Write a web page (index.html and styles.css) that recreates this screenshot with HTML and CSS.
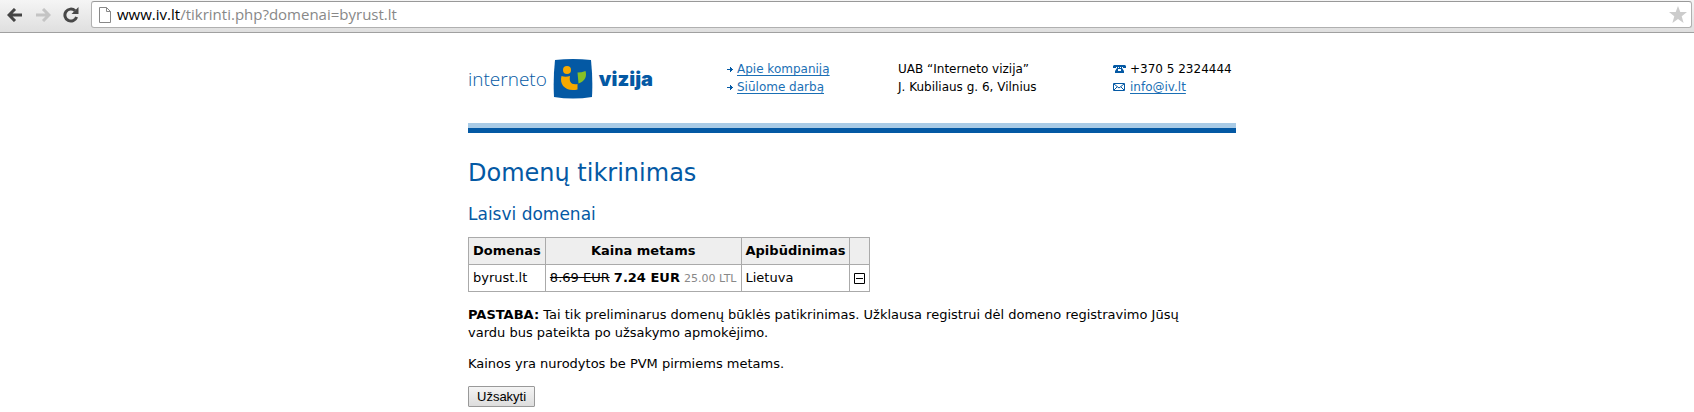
FILE: index.html
```html
<!DOCTYPE html>
<html lang="lt">
<head>
    <meta charset="UTF-8">
    <meta name="viewport" content="width=device-width, initial-scale=1.0">
    <title>Domenų tikrinimas</title>
    <link rel="stylesheet" href="styles.css">
</head>
<body>
    <div class="toolbar">
        <button class="nav-button" type="button" aria-label="Atgal">
            <svg width="16" height="14" viewBox="0 0 16 14" fill="none" stroke="#444" stroke-width="3"><path d="M8 1L2 7l6 6M2 7h13"/></svg>
        </button>
        <button class="nav-button" type="button" aria-label="Pirmyn" disabled>
            <svg width="16" height="14" viewBox="0 0 16 14" fill="none" stroke="#c4c4c4" stroke-width="3"><path d="M8 1l6 6-6 6M14 7H1"/></svg>
        </button>
        <button class="nav-button" type="button" aria-label="Perkrauti">
            <svg width="16" height="16" viewBox="0 0 16 16"><path d="M12 3.700A6 6 0 1 0 13.600 10" fill="none" stroke="#484848" stroke-width="3"/><path d="M15.500 0v7H8.500z" fill="#484848"/></svg>
        </button>
        <div class="address-bar">
            <svg width="12" height="16" viewBox="0 0 12 16" fill="#fff" stroke="#888"><path d="M.5.5h7l4 4v11H.5zM7.500.5v4h4"/></svg>
            <span class="url"><span class="host">www.iv.lt</span>/tikrinti.php?domenai=byrust.lt</span>
            <svg width="18" height="17" viewBox="0 0 18 17"><path d="M9 0l2.300 6H18l-5.300 4.200L14.600 17 9 13l-5.600 4 1.900-6.800L0 6h6.700z" fill="#ccc"/></svg>
        </div>
    </div>

    <div class="page">
        <div class="header">
            <div class="logo">
                <span class="logo-light">interneto</span>
                <svg width="40" height="40" viewBox="0 0 40 40">
                    <path d="M2 1Q20-1 38 1Q40 20 39 38Q20 41 1 38Q0 20 2 1z" fill="#0459a4"/>
                    <circle cx="14" cy="11" r="4" fill="#f6a900"/>
                    <path d="M8.500 17q4 1.500 8.500 0c-1 6 1 9 7.500 8v5.500C13 33 6 26 8.500 17z" fill="#f6a900"/>
                    <path d="M24.500 13.500q4 0 8-1.500c1.500 5 0 10-7 12.500z" fill="#86bf25"/>
                </svg>
                <span class="logo-bold">vizija</span>
            </div>
            <ul class="contacts">
                <li><svg width="6" height="5" viewBox="0 0 6 5"><path d="M0 2h3V0h1v1h1v1h1v1H5v1H4v1H3V3H0z" fill="#0459a4"/></svg><a href="#">Apie kompaniją</a></li>
                <li><svg width="6" height="5" viewBox="0 0 6 5"><path d="M0 2h3V0h1v1h1v1h1v1H5v1H4v1H3V3H0z" fill="#0459a4"/></svg><a href="#">Siūlome darbą</a></li>
            </ul>
            <ul class="contacts">
                <li>UAB “Interneto vizija”</li>
                <li>J. Kubiliaus g. 6, Vilnius</li>
            </ul>
            <ul class="contacts">
                <li><svg width="13" height="8" viewBox="0 0 13 8"><path d="M1 0h11l1 1v2h-3V2H9v1l2 3v2H2V6l2-3V2H3v1H0V1z" fill="#0459a4"/><path d="M5 2h1v1h1V2h1v1H5zM5 4h3v2H5z" fill="#fff"/></svg>+370 5 2324444</li>
                <li><svg width="13" height="8" viewBox="0 0 13 8" fill="none" stroke="#0459a4"><path d="M.5.5h11v7H.5zM1 1l5 4 5-4M1 7l3-3M11 7L8 4"/></svg><a href="#">info@iv.lt</a></li>
            </ul>
        </div>

        <h1>Domenų tikrinimas</h1>
        <h2>Laisvi domenai</h2>

        <table class="domains">
            <tr>
                <th>Domenas</th>
                <th>Kaina metams</th>
                <th>Apibūdinimas</th>
                <th></th>
            </tr>
            <tr>
                <td>byrust.lt</td>
                <td><del>8.69 EUR</del> <b>7.24 EUR</b> <span class="ltl">25.00 LTL</span></td>
                <td>Lietuva</td>
                <td><button class="remove" type="button" aria-label="Pašalinti"><svg width="11" height="11" viewBox="0 0 11 11" fill="none" stroke="#000"><path d="M.5.5h10v10H.5zM2 5.500h7"/></svg></button></td>
            </tr>
        </table>

        <p><b>PASTABA:</b> Tai tik preliminarus domenų būklės patikrinimas. Užklausa registrui dėl domeno registravimo Jūsų vardu bus pateikta po užsakymo apmokėjimo.</p>
        <p>Kainos yra nurodytos be PVM pirmiems metams.</p>
        <button class="order" type="button">Užsakyti</button>
    </div>
</body>
</html>
```
FILE: styles.css
```css
body {
    margin: 0;
    background-color: #fff;
    color: #000;
    font-family: Verdana, "DejaVu Sans", sans-serif;
    font-size: 13px;
    line-height: 18px;
}
svg { flex: none; }
.toolbar {
    display: flex;
    align-items: center;
    gap: 12px;
    padding: 1px 2px 4px 7px;
    background: linear-gradient(#f5f5f5, #dfdfdf);
    border-bottom: 1px solid #a0a0a0;
}
.nav-button {
    display: flex;
    padding: 0;
    border: none;
    background: none;
}
.address-bar {
    flex: 1;
    display: flex;
    align-items: center;
    gap: 6px;
    padding: 0 4px 0 7px;
    border: 1px solid #b0b0b0;
    border-top-color: #999;
    border-radius: 3px;
    background-color: #fff;
}
.url {
    flex: 1;
    color: #888;
    font-family: "Open Sans", sans-serif;
    font-size: 15px;
    line-height: 25px;
}
.host { color: #000; }

.page {
    max-width: 768px;
    margin: 0 auto;
    padding: 26px 0 0 10px;
}
.header {
    display: grid;
    grid-template-columns: 259px 171px 215px 1fr;
    align-items: start;
    padding-bottom: 29px;
    border-bottom: 5px solid #0459a4;
    box-shadow: inset 0 -5px #a9cbe6;
}
.logo {
    display: flex;
    align-items: center;
    gap: 6px;
    color: #0459a4;
}
.logo-light {
    font-family: "Open Sans", sans-serif;
    font-size: 19px;
    font-weight: 300;
}
.logo-bold {
    font-family: Inter, sans-serif;
    font-size: 20px;
    font-weight: 900;
}
.contacts {
    margin: 0;
    padding: 1px 0 0;
    list-style: none;
    font-size: 12px;
}
.contacts li {
    display: flex;
    align-items: center;
    gap: 4px;
    white-space: nowrap;
}
.contacts a {
    color: #1a6fb5;
    text-decoration: underline;
    text-underline-offset: 2px;
}
h1, h2 {
    margin: 0;
    color: #0459a4;
    font-weight: normal;
}
h1 {
    margin-top: 25px;
    font-size: 24px;
    line-height: 30px;
}
h2 {
    margin: 15px 0 12px;
    font-size: 17px;
    line-height: 22px;
}
.domains {
    border-collapse: collapse;
}
.domains th, .domains td {
    height: 18px;
    padding: 4px;
    border: 1px solid #aaa;
    white-space: nowrap;
}
.domains th { background-color: #eee; }
.ltl {
    color: #888;
    font-size: 11px;
    line-height: 1;
}
.remove {
    display: flex;
    padding: 0;
    border: none;
    background: none;
}
p {
    margin: 13px 0;
    padding-right: 24px;
}
.domains + p { margin-top: 14px; }
.order {
    padding: 1px 8px;
    border: 1px solid #999;
    border-radius: 1px;
    background: linear-gradient(#f4f4f4, #ddd);
    color: #000;
    font-family: Arial, "Liberation Sans", sans-serif;
    font-size: 13px;
    line-height: 17px;
}
```
